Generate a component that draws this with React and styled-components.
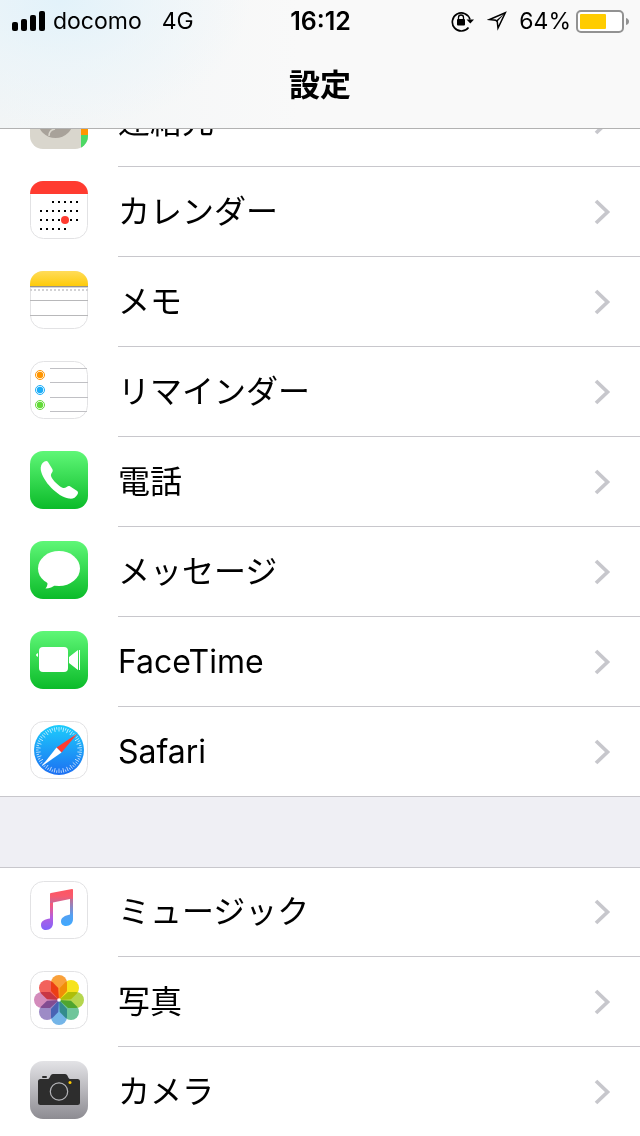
import React from "react";
import styled, { createGlobalStyle } from "styled-components";

const GlobalStyle = createGlobalStyle`
  * { box-sizing: border-box; }
  body {
    margin: 0;
    background: #fff;
    color: #000;
    font-family: Inter, "Noto Sans CJK JP", "Liberation Sans", sans-serif;
  }
`;

const Screen = styled.div`
  height: 100vh;
  display: flex;
  flex-direction: column;
  overflow: hidden;
`;

const Header = styled.header`
  flex: none;
  border-bottom: 1px solid #b2b2b2;
  background:
    radial-gradient(ellipse 190px 130px at 60px 0, #e2f2fa, rgba(232, 244, 250, 0.6) 50%, rgba(248, 248, 248, 0)),
    linear-gradient(90deg, #f2f5f6, #f9f9f9 300px);
`;

const StatusBar = styled.div`
  height: 42px;
  padding: 0 11px 0 12px;
  display: grid;
  grid-template-columns: 1fr auto 1fr;
  align-items: center;
  font-size: 23px;
  line-height: 42px;
`;

const StatusGroup = styled.div`
  display: flex;
  align-items: center;
  justify-content: ${(p) => (p.$end ? "flex-end" : "flex-start")};
  gap: ${(p) => p.$gap}px;
`;

const Clock = styled.time`
  font-size: 25px;
  font-weight: 600;
`;

const Title = styled.h1`
  margin: 0;
  height: 86px;
  font-size: 31px;
  line-height: 86px;
  font-weight: 700;
  text-align: center;
`;

const Viewport = styled.main`
  flex: 1;
  min-height: 0;
  overflow: hidden;
`;

const Content = styled.div`
  margin-top: -52px;
`;

const Group = styled.ul`
  margin: 0;
  padding: 0;
  list-style: none;
  box-shadow: inset 0 1px #c8c7cc;
`;

const Spacer = styled.div`
  height: 70px;
  background: #efeff4;
`;

const Row = styled.a`
  height: 90px;
  padding-left: 30px;
  display: flex;
  gap: 30px;
  color: inherit;
  text-decoration: none;
  box-shadow: ${(p) => (p.$last ? "inset 0 -1px #c8c7cc" : "none")};
`;

const AppIcon = styled.svg`
  flex: none;
  width: 58px;
  height: 58px;
  margin-top: 14px;
`;

const RowBody = styled.div`
  flex: 1;
  display: flex;
  align-items: center;
  justify-content: space-between;
  padding-right: 29px;
  border-bottom: 1px solid ${(p) => (p.$last ? "transparent" : "#c8c7cc")};
`;

const Label = styled.span`
  font-size: 32px;
  line-height: 48px;
`;

const Chevron = () => (
  <svg width="17" height="28" viewBox="0 0 17 28" aria-hidden="true">
    <path d="M2 3 L13.500 14 L2 25" fill="none" stroke="#c7c7cc" strokeWidth="3.700" />
  </svg>
);

const Outline = () => (
  <rect x="0.500" y="0.500" width="57" height="57" rx="13" fill="none" stroke="#e2e2e4" />
);

const Tile = ({ fill }) => <rect width="58" height="58" rx="13" fill={fill} />;

function Contacts() {
  return (
    <>
      <clipPath id="contactsClip"><rect width="58" height="58" rx="13" /></clipPath>
      <g clipPath="url(#contactsClip)">
        <rect width="58" height="58" fill="#d9d6cd" />
        <rect x="51" width="7" height="22" fill="#1badf8" />
        <rect x="51" y="22" width="7" height="22" fill="#ff9500" />
        <rect x="51" y="44" width="7" height="14" fill="#4cd964" />
        <circle cx="25.500" cy="29" r="18" fill="#a8a29a" />
        <path d="M19 45 Q19 39 25 38" fill="none" stroke="#d9d6cd" strokeWidth="1.500" />
      </g>
    </>
  );
}

function Calendar() {
  const rows = [[22, 46], [10, 46], [10, 46], [10, 34]];
  const cells = [];
  rows.forEach(([from, to], r) => {
    for (let x = from; x <= to; x += 6) cells.push([x, 20 + r * 9]);
  });
  return (
    <>
      <clipPath id="calendarClip"><rect width="58" height="58" rx="13" /></clipPath>
      <Tile fill="#fff" />
      <Outline />
      <rect width="58" height="13" fill="#ff3b30" clipPath="url(#calendarClip)" />
      {cells.map(([x, y]) => <rect key={`${x}-${y}`} x={x} y={y} width="2" height="2" />)}
      <circle cx="35" cy="39" r="4" fill="#ff3b30" />
    </>
  );
}

function Notes() {
  return (
    <>
      <linearGradient id="notesFill" x1="0" y1="0" x2="0" y2="1">
        <stop offset="0" stopColor="#ffdc5a" /><stop offset="1" stopColor="#fecb09" />
      </linearGradient>
      <clipPath id="notesClip"><rect width="58" height="58" rx="13" /></clipPath>
      <Outline />
      <g clipPath="url(#notesClip)">
        <rect width="58" height="15" fill="url(#notesFill)" />
        <rect y="15" width="58" height="1" fill="#96938a" />
        <rect y="16" width="58" height="1" fill="#d5d5d5" />
        <path d="M0 19H58" stroke="#d2d2d4" strokeWidth="2" strokeDasharray="2 2" />
        <path d="M0 29.500H58M0 44.500H58" stroke="#b8b8ba" />
      </g>
    </>
  );
}

function Reminders() {
  return (
    <>
      <Outline />
      {["#ff9500", "#1badf8", "#63da38"].map((c, i) => (
        <g key={c}>
          <circle cx="10" cy={14 + i * 15} r="4.500" fill="none" stroke={c} />
          <circle cx="10" cy={14 + i * 15} r="3.200" fill={c} />
        </g>
      ))}
      <path d="M20 7.500H57M20 21.500H58M20 36.500H58M20 50.500H57" stroke="#c0c0c4" />
    </>
  );
}

const GreenTile = ({ id }) => (
  <>
    <linearGradient id={id} x1="0" y1="0" x2="0" y2="1">
      <stop offset="0" stopColor="#5ff777" /><stop offset="1" stopColor="#0bbb29" />
    </linearGradient>
    <Tile fill={`url(#${id})`} />
  </>
);

function Phone() {
  return (
    <>
      <GreenTile id="phoneFill" />
      <path
        fill="#fff"
        d="M14.500 10.500C16 9.600 17.300 9.800 18 11L22.300 18C23 19.300 22.800 20.300 22 21.500C21 22.800 20.600 24 21.200 25.500C22.500 29 28.500 35 32.500 36.800C34 37.400 35.200 37 36.600 36C38 35 39 34.700 40.300 35.500L46.800 39.800C48.300 40.800 48.300 42 47.400 43.500C45.600 46.800 42.800 48.200 39 47.600C27.500 45.700 12.500 30 10.800 19C10.300 15.400 11.500 12.300 14.500 10.500Z"
      />
    </>
  );
}

function Messages() {
  return (
    <>
      <GreenTile id="messagesFill" />
      <ellipse cx="29" cy="27.500" rx="21" ry="17.500" fill="#fff" />
      <path fill="#fff" d="M17 40C18 42.500 17.500 45 15.500 47.500C19.500 47.500 23 46 25.500 43.500L22 39Z" />
    </>
  );
}

function FaceTime() {
  return (
    <>
      <GreenTile id="facetimeFill" />
      <rect x="9" y="16" width="29" height="25" rx="4" fill="#fff" />
      <path fill="#fff" d="M39 26L48 19V39L39 32ZM49 19H50V39H49ZM8 22V26Q6 25 6 24T8 22Z" />
    </>
  );
}

function Safari() {
  return (
    <>
      <linearGradient id="safariFill" x1="0" y1="0" x2="0" y2="1">
        <stop offset="0" stopColor="#1ccdfc" /><stop offset="1" stopColor="#1d6ff2" />
      </linearGradient>
      <Outline />
      <circle cx="29" cy="29" r="25" fill="url(#safariFill)" />
      {Array.from({ length: 60 }, (_, i) => (
        <path
          key={i}
          d={i % 2 ? "M29 6V8.500" : "M29 6V10.500"}
          stroke="#fff"
          strokeOpacity="0.800"
          strokeWidth="0.800"
          transform={`rotate(${i * 6} 29 29)`}
        />
      ))}
      <path d="M47.500 12.500L26.500 26.500L31.500 31.500Z" fill="#ff3b30" />
      <path d="M11.500 45.500L26.500 26.500L31.500 31.500Z" fill="#fff" />
    </>
  );
}

function Music() {
  return (
    <>
      <linearGradient id="musicPink" x1="0" y1="0" x2="0" y2="1">
        <stop offset="0" stopColor="#ff5764" /><stop offset="0.300" stopColor="#f4597c" />
        <stop offset="0.650" stopColor="#b45ee0" /><stop offset="1" stopColor="#7f62fb" />
      </linearGradient>
      <linearGradient id="musicBlue" x1="0" y1="0" x2="0" y2="1">
        <stop offset="0" stopColor="#f8545f" /><stop offset="0.300" stopColor="#b5749f" />
        <stop offset="0.700" stopColor="#54a0f2" /><stop offset="1" stopColor="#3fa9ff" />
      </linearGradient>
      <linearGradient id="musicBeam" x1="0" y1="0" x2="0" y2="1">
        <stop offset="0" stopColor="#fd5560" /><stop offset="0.500" stopColor="#f95a6c" />
        <stop offset="1" stopColor="#c9679a" />
      </linearGradient>
      <Outline />
      <path fill="url(#musicPink)" d="M20 13V37.500C15 38 11 40 11 44C11 47 13 49 16 49C20.500 49 23 46 23 42V13Z" />
      <path fill="url(#musicBlue)" d="M40 9V33.500C35 34.500 31 36.500 31 40.500C31 43.500 33.500 45 36 45C40.500 45 43 42 43 38V9Z" />
      <path fill="url(#musicBeam)" d="M20 13Q20 12 21 12L42 8Q43 7.800 43 9V18H40L23 21.500L20 22Z" />
    </>
  );
}

const petals = ["#f9a03a", "#f6e31c", "#b5d64e", "#6fc59a", "#74b5e8", "#9d8bc6", "#d38bbb", "#f2625c"];

function Photos() {
  return (
    <>
      <Outline />
      <g style={{ isolation: "isolate" }}>
        {petals.map((c, i) => (
          <path
            key={c}
            d="M21 12A8 8 0 0 1 37 12V20L29 29L21 20Z"
            fill={c}
            transform={`rotate(${i * 45} 29 29)`}
            style={{ mixBlendMode: "multiply" }}
          />
        ))}
      </g>
      <circle cx="29" cy="29" r="1.800" fill="#fff" />
    </>
  );
}

function Camera() {
  return (
    <>
      <linearGradient id="cameraFill" x1="0" y1="0" x2="0" y2="1">
        <stop offset="0" stopColor="#e3e3e6" /><stop offset="1" stopColor="#8d8c92" />
      </linearGradient>
      <Tile fill="url(#cameraFill)" />
      <rect x="12" y="15" width="5" height="2" rx="1" fill="#2d2d2d" />
      <path
        fill="#2d2d2d"
        d="M10.500 18H18C20 18 20 13 23 13H35C38 13 38 18 40 18H47.500Q50 18 50 20.500V41.500Q50 44 47.500 44H10.500Q8 44 8 41.500V20.500Q8 18 10.500 18Z"
      />
      <circle cx="29" cy="30.500" r="8.700" fill="none" stroke="#b4b4b8" strokeWidth="1.200" />
      <circle cx="40" cy="21.500" r="1.500" fill="#ffcc00" />
    </>
  );
}

const groups = [
  [
    ["連絡先", Contacts],
    ["カレンダー", Calendar],
    ["メモ", Notes],
    ["リマインダー", Reminders],
    ["電話", Phone],
    ["メッセージ", Messages],
    ["FaceTime", FaceTime],
    ["Safari", Safari],
  ],
  [
    ["ミュージック", Music],
    ["写真", Photos],
    ["カメラ", Camera],
  ],
];

const SettingsGroup = ({ items, ends }) => (
  <Group>
    {items.map(([name, Icon], i) => {
      const last = ends && i === items.length - 1;
      return (
        <li key={name}>
          <Row href="#" $last={last}>
            <AppIcon viewBox="0 0 58 58" aria-hidden="true"><Icon /></AppIcon>
            <RowBody $last={last}>
              <Label>{name}</Label>
              <Chevron />
            </RowBody>
          </Row>
        </li>
      );
    })}
  </Group>
);

export default function App() {
  return (
    <Screen>
      <GlobalStyle />
      <Header>
        <StatusBar>
          <StatusGroup $gap={20}>
            <StatusGroup $gap={8}>
              <svg width="33" height="20" viewBox="0 0 33 20" aria-hidden="true">
                <rect y="11" width="6" height="9" rx="2" />
                <rect x="9" y="8" width="6" height="12" rx="2" />
                <rect x="18" y="4" width="6" height="16" rx="2" />
                <rect x="27" width="6" height="20" rx="2" />
              </svg>
              <span>docomo</span>
            </StatusGroup>
            <span>4G</span>
          </StatusGroup>
          <Clock>16:12</Clock>
          <StatusGroup $gap={12} $end>
            <svg width="24" height="22" viewBox="0 0 24 22" aria-hidden="true">
              <path d="M17.500 17.500A9 9 0 1 1 19 9.500" fill="none" stroke="#000" strokeWidth="1.700" />
              <path d="M15.500 9.500H23L19.300 13.500Z" />
              <rect x="6" y="9" width="8" height="6.500" rx="1" />
              <path d="M7.500 9.500V7.500A2.500 2.500 0 0 1 12.500 7.500V9.500" fill="none" stroke="#000" strokeWidth="1.300" />
            </svg>
            <svg width="20" height="20" viewBox="0 0 20 20" aria-hidden="true">
              <path d="M18.300 1.700L2.500 8.500L8.700 9.200L10.300 10.800L11 17Z" fill="none" stroke="#000" strokeWidth="1.500" />
              <path d="M18 2L9 9.500L10.500 10.500Z" />
            </svg>
            <StatusGroup $gap={5}>
              <span>64%</span>
              <svg width="53" height="23" viewBox="0 0 53 23" aria-hidden="true">
                <rect x="1" y="1" width="46" height="21" rx="4" fill="#fff" stroke="#929292" strokeWidth="2" />
                <rect x="4" y="4" width="26" height="15" rx="1" fill="#ffcc00" />
                <path d="M50 8Q53 9 53 11.500T50 15Z" fill="#929292" />
              </svg>
            </StatusGroup>
          </StatusGroup>
        </StatusBar>
        <Title>設定</Title>
      </Header>
      <Viewport>
        <Content>
          <SettingsGroup items={groups[0]} ends />
          <Spacer />
          <SettingsGroup items={groups[1]} />
        </Content>
      </Viewport>
    </Screen>
  );
}
